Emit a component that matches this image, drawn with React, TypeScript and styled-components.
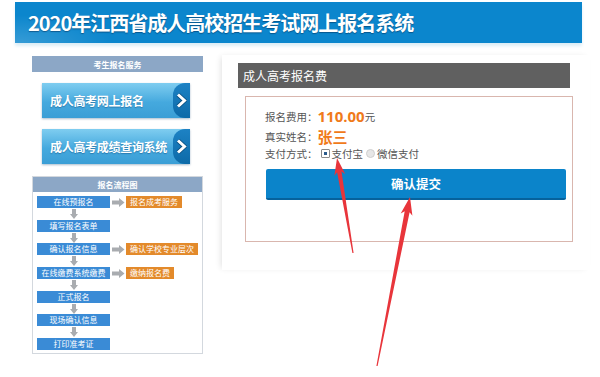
import styled, { createGlobalStyle } from "styled-components";

const GlobalStyle = createGlobalStyle`
  html, body {
    margin: 0;
    padding: 0;
    background: #fff;
    font-family: "Noto Sans CJK SC", "Noto Sans", sans-serif;
  }
`;

const Page = styled.div`
  position: relative;
  width: 600px;
  height: 377px;
  overflow: hidden;
  background: #fff;
`;

const Header = styled.div`
  margin: 2px 18px 0 15px;
  height: 41px;
  display: flex;
  align-items: center;
  padding-left: 13px;
  background:
    radial-gradient(ellipse 140px 40px at 0% 100%, rgba(255, 255, 255, 0.18), rgba(255, 255, 255, 0) 70%),
    #0b86cd;
  box-shadow: 0 3px 3px #dcedf6;
`;

const HeaderTitle = styled.h1`
  margin: 0;
  font-size: 20px;
  font-weight: 700;
  letter-spacing: -1px;
  color: #fff;
  text-shadow: 0 1px 1px rgba(0, 40, 80, 0.5);
`;

const Body = styled.div`
  display: flex;
  align-items: flex-start;
  padding-left: 32px;
  margin-top: 13px;
`;

const LeftCol = styled.div`
  width: 171px;
  display: flex;
  flex-direction: column;
`;

const SideHeader = styled.div`
  height: 16px;
  background: #8ca7c6;
  color: #fff;
  font-size: 8px;
  font-weight: 700;
  display: flex;
  align-items: center;
  justify-content: center;
`;

const NavButton = styled.div`
  margin: 11px 13px 0 10px;
  height: 35px;
  display: flex;
  align-items: center;
  justify-content: space-between;
  background: linear-gradient(#7fcdf0, #45a9de 55%, #3a9ed6);
  box-shadow: 0 1px 2px rgba(0, 60, 110, 0.35);
  color: #fff;
  font-size: 12px;
  font-weight: 700;
  letter-spacing: -0.3px;
  white-space: nowrap;
  padding-left: 8px;
  text-shadow: 0 1px 1px rgba(0, 60, 110, 0.4);
`;

const NavTab = styled.div`
  width: 17px;
  height: 100%;
  flex-shrink: 0;
  border-radius: 12px 0 0 12px;
  background: linear-gradient(#1d82c4, #0d6aa8);
  display: flex;
  align-items: center;
  justify-content: center;
`;

const FlowBox = styled.div`
  margin-top: 12px;
  height: 176px;
  border: 1px solid #d3d8de;
  display: flex;
  flex-direction: column;
`;

const FlowHeader = styled(SideHeader)`
  height: 15px;
`;

const FlowList = styled.div`
  padding: 4px 0 0 4px;
  display: flex;
  flex-direction: column;
`;

const FlowRow = styled.div`
  height: 12px;
  display: flex;
  align-items: center;
`;

const Step = styled.div<{ $tone: "blue" | "orange" }>`
  height: 12px;
  min-width: ${(p) => (p.$tone === "blue" ? "73px" : "auto")};
  padding: ${(p) => (p.$tone === "blue" ? "0" : "0 4px")};
  box-sizing: border-box;
  background: ${(p) => (p.$tone === "blue" ? "#3a8bd6" : "#e38a2b")};
  color: #fff;
  font-size: 8px;
  line-height: 12px;
  text-align: center;
  white-space: nowrap;
`;

const SideArrow = styled.div`
  width: 16px;
  display: flex;
  justify-content: center;
`;

const DownArrow = styled.div`
  height: 11.7px;
  width: 73px;
  display: flex;
  align-items: center;
  justify-content: center;
`;

const RightCol = styled.div`
  margin-left: 19px;
  width: 368px;
  margin-top: -1px;
  padding: 8px 0 28px 16px;
  box-sizing: border-box;
  box-shadow: -3px 0 6px -2px rgba(0, 0, 0, 0.12);
`;

const PanelTitle = styled.div`
  width: 332px;
  height: 25px;
  background: #606060;
  color: #fff;
  font-size: 12px;
  display: flex;
  align-items: center;
  padding-left: 5px;
  box-sizing: border-box;
`;

const FeeBox = styled.div`
  margin: 8px 0 0 7px;
  width: 328px;
  height: 146px;
  box-sizing: border-box;
  border: 1px solid #d9b6ae;
  padding: 9px 0 0 19px;
`;

const InfoRow = styled.div<{ $h?: number }>`
  height: ${(p) => p.$h ?? 20}px;
  display: flex;
  align-items: center;
  font-size: 10.5px;
  color: #555;
`;

const Value = styled.span`
  color: #f07a1a;
  font-size: 15px;
  font-weight: 700;
  font-family: "Open Sans", "Noto Sans CJK SC", sans-serif;
`;

const Radio = styled.span<{ $checked?: boolean }>`
  display: inline-flex;
  align-items: center;
  justify-content: center;
  width: 7px;
  height: 7px;
  margin: 0 2px 0 3px;
  border: 1px solid ${(p) => (p.$checked ? "#8a8a8a" : "#cfcfcf")};
  border-radius: ${(p) => (p.$checked ? "1px" : "50%")};
  background: ${(p) => (p.$checked ? "#fff" : "#e6e6e6")};
  &::after {
    content: "";
    display: ${(p) => (p.$checked ? "block" : "none")};
    width: 3px;
    height: 3px;
    background: #2c5c8c;
  }
`;

const SubmitButton = styled.button`
  margin-top: 8px;
  margin-left: 1px;
  width: 300px;
  height: 31px;
  border: none;
  border-bottom: 2px solid #06629c;
  border-radius: 2px;
  background: #0b84ca;
  color: #fff;
  font-family: "Noto Sans CJK SC", sans-serif;
  font-size: 12.5px;
  font-weight: 700;
  display: block;
`;

const Overlay = styled.svg`
  position: absolute;
  left: 0;
  top: 0;
  pointer-events: none;
`;

type Pt = [number, number];

function arrowPoints(tip: Pt, tail: Pt, headLen = 17, headW = 11, shaftW = 4.5) {
  const dx = tip[0] - tail[0];
  const dy = tip[1] - tail[1];
  const len = Math.hypot(dx, dy);
  const ux = dx / len;
  const uy = dy / len;
  const nx = -uy;
  const ny = ux;
  const bx = tip[0] - ux * headLen;
  const by = tip[1] - uy * headLen;
  const s = (x: number, y: number, w: number) => [x + nx * w, y + ny * w];
  const pts = [
    s(tail[0], tail[1], 0.6),
    s(bx + ux * 3, by + uy * 3, shaftW / 2),
    s(bx, by, headW / 2),
    tip,
    s(bx, by, -headW / 2),
    s(bx + ux * 3, by + uy * 3, -shaftW / 2),
    s(tail[0], tail[1], -0.6),
  ];
  return pts.map((p) => `${p[0].toFixed(1)},${p[1].toFixed(1)}`).join(" ");
}

const Chevron = () => (
  <svg width="11" height="15" viewBox="0 0 11 15">
    <polyline points="2,1.5 8.5,7.5 2,13.5" fill="none" stroke="#0a4f80" strokeWidth="4.5" />
    <polyline points="2,1.5 8.5,7.5 2,13.5" fill="none" stroke="#fff" strokeWidth="3" />
  </svg>
);

const RightGray = () => (
  <svg width="13" height="9" viewBox="0 0 13 9">
    <polygon points="0,2.5 7,2.5 7,0 12.5,4.5 7,9 7,6.5 0,6.5" fill="#a9acb0" />
  </svg>
);

const DownGray = () => (
  <svg width="8" height="10" viewBox="0 0 8 10">
    <polygon points="2,0 6,0 6,5 8,5 4,10 0,5 2,5" fill="#a9acb0" />
  </svg>
);

const flow: { step: string; side?: string }[] = [
  { step: "在线预报名", side: "报名成考服务" },
  { step: "填写报名表单" },
  { step: "确认报名信息", side: "确认学校专业层次" },
  { step: "在线缴费系统缴费", side: "缴纳报名费" },
  { step: "正式报名" },
  { step: "现场确认信息" },
  { step: "打印准考证" },
];

export default function App() {
  return (
    <Page>
      <GlobalStyle />
      <Header>
        <HeaderTitle>2020年江西省成人高校招生考试网上报名系统</HeaderTitle>
      </Header>
      <Body>
        <LeftCol>
          <SideHeader>考生报名服务</SideHeader>
          <NavButton>
            成人高考网上报名
            <NavTab>
              <Chevron />
            </NavTab>
          </NavButton>
          <NavButton>
            成人高考成绩查询系统
            <NavTab>
              <Chevron />
            </NavTab>
          </NavButton>
          <FlowBox>
            <FlowHeader>报名流程图</FlowHeader>
            <FlowList>
              {flow.map((f, i) => (
                <div key={f.step}>
                  <FlowRow>
                    <Step $tone="blue">{f.step}</Step>
                    {f.side && (
                      <>
                        <SideArrow>
                          <RightGray />
                        </SideArrow>
                        <Step $tone="orange">{f.side}</Step>
                      </>
                    )}
                  </FlowRow>
                  {i < flow.length - 1 && (
                    <DownArrow>
                      <DownGray />
                    </DownArrow>
                  )}
                </div>
              ))}
            </FlowList>
          </FlowBox>
        </LeftCol>
        <RightCol>
          <PanelTitle>成人高考报名费</PanelTitle>
          <FeeBox>
            <InfoRow>
              报名费用：<Value>110.00</Value>元
            </InfoRow>
            <InfoRow>
              真实姓名：<Value>张三</Value>
            </InfoRow>
            <InfoRow $h={15}>
              支付方式：<Radio $checked />支付宝<Radio />微信支付
            </InfoRow>
            <SubmitButton>确认提交</SubmitButton>
          </FeeBox>
        </RightCol>
      </Body>
      <Overlay width="600" height="377" viewBox="0 0 600 377">
        <polygon points={arrowPoints([337, 158], [353, 253])} fill="#e8353b" />
        <polygon points={arrowPoints([410, 197], [377, 366], 18, 12, 5)} fill="#e8353b" />
      </Overlay>
    </Page>
  );
}
